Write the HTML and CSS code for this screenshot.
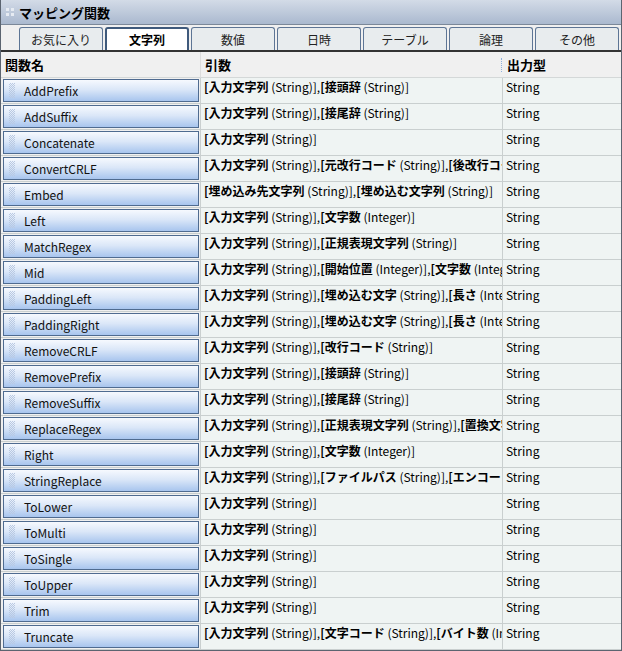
FILE: index.html
```html
<!DOCTYPE html>
<html lang="ja">
  <head>
	<meta charset="UTF-8" />
	<title>マッピング関数</title>
	<link rel="stylesheet" href="styles.css">
  </head>
  <body>
	<div class="panel">
	  <div class="titlebar">
		<svg class="grip" width="8" height="8" viewBox="0 0 8 8">
		  <rect x="0" y="0" width="3" height="3" fill="#e6ebf2"/>
		  <rect x="5" y="0" width="3" height="3" fill="#e6ebf2"/>
		  <rect x="0" y="5" width="3" height="3" fill="#e6ebf2"/>
		  <rect x="5" y="5" width="3" height="3" fill="#e6ebf2"/>
		</svg>
		<span>マッピング関数</span>
	  </div>

	  <div class="tabs">
		<div class="tab">お気に入り</div>
		<div class="tab active">文字列</div>
		<div class="tab">数値</div>
		<div class="tab">日時</div>
		<div class="tab">テーブル</div>
		<div class="tab">論理</div>
		<div class="tab">その他</div>
	  </div>

	  <div class="grid">
		<div class="head">
		  <div class="hcell">関数名</div>
		  <div class="hcell">引数<i class="splitter"></i></div>
		  <div class="hcell last">出力型</div>
		</div>
		<div id="rows"></div>
	  </div>
	</div>

	<script>
	  var funcs = [
	    ["AddPrefix", [["入力文字列", "String"], ["接頭辞", "String"]]],
	    ["AddSuffix", [["入力文字列", "String"], ["接尾辞", "String"]]],
	    ["Concatenate", [["入力文字列", "String"]]],
	    ["ConvertCRLF", [["入力文字列", "String"], ["元改行コード", "String"], ["後改行コード", "String"]]],
	    ["Embed", [["埋め込み先文字列", "String"], ["埋め込む文字列", "String"]]],
	    ["Left", [["入力文字列", "String"], ["文字数", "Integer"]]],
	    ["MatchRegex", [["入力文字列", "String"], ["正規表現文字列", "String"]]],
	    ["Mid", [["入力文字列", "String"], ["開始位置", "Integer"], ["文字数", "Integer"]]],
	    ["PaddingLeft", [["入力文字列", "String"], ["埋め込む文字", "String"], ["長さ", "Integer"]]],
	    ["PaddingRight", [["入力文字列", "String"], ["埋め込む文字", "String"], ["長さ", "Integer"]]],
	    ["RemoveCRLF", [["入力文字列", "String"], ["改行コード", "String"]]],
	    ["RemovePrefix", [["入力文字列", "String"], ["接頭辞", "String"]]],
	    ["RemoveSuffix", [["入力文字列", "String"], ["接尾辞", "String"]]],
	    ["ReplaceRegex", [["入力文字列", "String"], ["正規表現文字列", "String"], ["置換文字列", "String"]]],
	    ["Right", [["入力文字列", "String"], ["文字数", "Integer"]]],
	    ["StringReplace", [["入力文字列", "String"], ["ファイルパス", "String"], ["エンコード", "String"]]],
	    ["ToLower", [["入力文字列", "String"]]],
	    ["ToMulti", [["入力文字列", "String"]]],
	    ["ToSingle", [["入力文字列", "String"]]],
	    ["ToUpper", [["入力文字列", "String"]]],
	    ["Trim", [["入力文字列", "String"]]],
	    ["Truncate", [["入力文字列", "String"], ["文字コード", "String"], ["バイト数", "Integer"]]]
	  ];

	  var html = "";
	  funcs.forEach(function (f) {
	    var args = f[1].map(function (a) {
	      return "<b>[" + a[0] + "</b> (" + a[1] + ")]";
	    }).join(",");
	    html += '<div class="row">' +
	      '<div class="cell name"><div class="fbtn"><i class="dots"></i>' + f[0] + '</div></div>' +
	      '<div class="cell args">' + args + '</div>' +
	      '<div class="cell out">String</div>' +
	      '</div>';
	  });
	  document.getElementById("rows").innerHTML = html;
	</script>
  </body>
</html>
```

FILE: styles.css
```css
* {
  box-sizing: border-box;
  margin: 0;
  padding: 0;
}
body {
  font-family: "Noto Sans CJK JP", "DejaVu Sans", sans-serif;
  font-size: 12px;
  color: #000;
  background: #fff;
}
.panel {
  width: 622px;
  height: 651px;
  border: 1px solid #5b6470;
  border-top: none;
  background: #f0f0f0;
  overflow: hidden;
}
.titlebar {
  height: 25px;
  display: flex;
  align-items: center;
  padding-left: 5px;
  gap: 5px;
  background: linear-gradient(#d3dbe7, #aab9cf);
  border-bottom: 1px solid #7b8899;
  font-weight: bold;
  font-size: 13px;
}
.tabs {
  height: 27px;
  display: flex;
  align-items: flex-end;
  gap: 2px;
  padding-left: 18px;
  border-bottom: 2px solid #333;
}
.tab {
  width: 84px;
  height: 23px;
  display: flex;
  align-items: center;
  justify-content: center;
  background: #e8ecee;
  border: 1px solid #5d7595;
  border-bottom: none;
  border-radius: 3px 3px 0 0;
  color: #222;
}
.tab.active {
  background: #fff;
  border: 2px solid #3f5a7c;
  border-bottom: none;
  font-weight: bold;
  color: #000;
}
.head {
  display: grid;
  grid-template-columns: 200px 302px 1fr;
  height: 26px;
  background: #f0f0f0;
  border-bottom: 1px solid #d4d8d8;
}
.hcell {
  display: flex;
  align-items: center;
  padding-left: 4px;
  font-weight: bold;
  font-size: 13px;
  border-right: 1px solid #dcdcdc;
}
.hcell:nth-child(2) {
  justify-content: space-between;
  border-right: none;
}
.splitter {
  width: 1px;
  height: 14px;
  border-left: 1px dotted #8fb0dc;
  margin-right: 1px;
}
.hcell.last {
  border-right: none;
}
.row {
  display: grid;
  grid-template-columns: 200px 302px 1fr;
  height: 26px;
  border-bottom: 1px solid #c9cfcf;
  background: #eff4f3;
}
.cell {
  border-right: 1px solid #c9cfcf;
  overflow: hidden;
  white-space: nowrap;
}
.cell.name {
  padding: 1px 1px 1px 2px;
  background: #f0f0f0;
}
.cell.args,
.cell.out {
  padding: 2px 0 0 3px;
  line-height: 14px;
}
.cell.out {
  border-right: none;
}
.fbtn {
  height: 23px;
  display: flex;
  align-items: center;
  gap: 9px;
  padding-left: 5px;
  border: 1px solid #4f6b90;
  background: linear-gradient(#f6f9fe, #dbe7f8 45%, #a8c5ee);
  color: #111;
}
.dots {
  width: 6px;
  height: 15px;
  background: conic-gradient(#b9c9e2 25%, transparent 0 50%, #b9c9e2 0 75%, transparent 0) 0 0 / 2px 2px;
}
.args b {
  font-weight: bold;
}
```
